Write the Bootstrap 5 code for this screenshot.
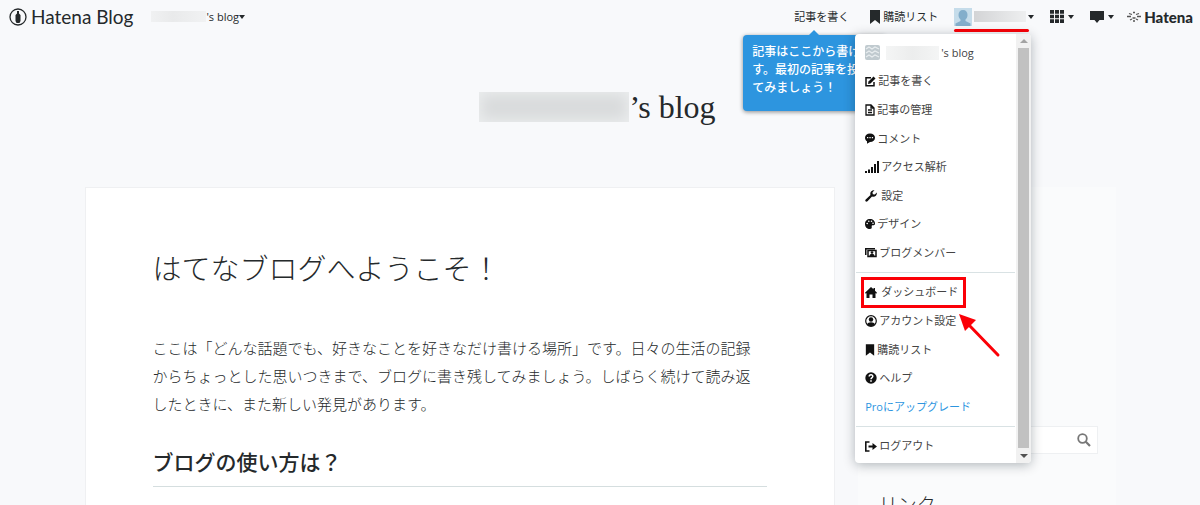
<!DOCTYPE html>
<html lang="ja">
<head>
<meta charset="utf-8">
<meta name="viewport" content="width=device-width, initial-scale=1">
<title>Hatena Blog</title>
<link href="https://cdn.jsdelivr.net/npm/bootstrap@5.3.0/dist/css/bootstrap.min.css" rel="stylesheet">
<style>
:root{--ink:#25292b;--ui:"Open Sans","Noto Sans CJK JP",sans-serif}
body{background:#f8f9fb;color:var(--ink);font-family:"Noto Sans CJK JP",sans-serif}
a{color:inherit;text-decoration:none}
svg{display:block;flex:none}
.topbar{height:33px;padding:0 7px 0 9px;font:11px/20px var(--ui)}
.topbar button{border:0;background:none;padding:0;color:inherit;font:inherit}
.logo-word{font:19px/24px Lato,sans-serif}
.hatena-word{font:900 15px/20px Lato,sans-serif}
.tight{gap:2px}
.after-item{margin-left:12px}
.first-gap{margin-left:20px}
.blog-switch{margin-left:18px}
.caret{width:0;height:0;border:3px solid transparent;border-top:4px solid var(--ink);border-bottom:0}
.masked{display:block;background:#eaebec}
.masked-blog{width:55px;height:11px;background:linear-gradient(90deg,#f0f1f2,#e9eaeb 40%,#f1f2f3)}
.masked-user{width:52px;height:11px;background:linear-gradient(90deg,#d3d4d6,#eeeff0)}
.masked-item{width:53px;height:14px;background:linear-gradient(90deg,#f4f5f5,#eceded 50%,#f4f5f5)}
.masked-title{width:150px;height:30px;background:#d9dbdc;box-shadow:inset 0 0 14px 2px #eceeef}
.user-mark{position:absolute;left:0;width:75px;top:21px;height:3px;border-radius:2px;background:#fb0007}
.tip{position:absolute;top:28px;left:-51px;width:143px;height:76px;padding:7px 9px;border-radius:4px;background:#2d95df;color:#fff;font:500 12px/18px "Noto Sans CJK JP",sans-serif;white-space:nowrap;box-shadow:0 1px 4px rgba(0,0,0,.45);z-index:5}
.tip::before{content:"";position:absolute;left:66px;top:-5px;border:5px solid transparent;border-top:0;border-bottom-color:#2d95df}
.usermenu{position:absolute;right:3px;top:26px;width:176px;height:429px;background:#fff;border-radius:4px;box-shadow:0 2px 12px rgba(0,20,30,.3);z-index:10;overflow:hidden}
.menu-list{padding:5px 0 2px;min-width:0}
.menu-list a{padding:0 10px;gap:2px;color:#444}
.menu-list a.upgrade{color:#2d95df}
.menu-list svg{color:#111}
.rule{height:1px;margin:5px 1px;background:#d9e2e4}
.scrolltrack{width:15px;background:#f1f1f1;padding:5px 2px}
.thumb{background:#c1c1c1;margin:5px 0 6px}
.arr{width:0;height:0;border:4px solid transparent}
.arr.up{border-top:0;border-bottom-color:#a3a3a3}
.arr.down{border-bottom:0;border-top-color:#505050}
.marked{position:relative}
.marked::after{content:"";position:absolute;left:6px;top:-1px;width:105px;height:31px;border:3px solid #fb0007}
.pointer{position:absolute;left:102px;top:278px}
.site-title{font:32px/40px "Liberation Serif","Noto Sans CJK JP",serif;padding:54px 5px 60px 0;margin:0}
.page{max-width:1031px}
.entry{width:72.8%;background:#fff;border:1px solid #eff0f2;padding:59px 67px 40px 67px}
.entry h2{font-size:29px;line-height:40px;font-weight:300;margin:0 0 47px}
.entry p{font-size:15px;line-height:28px;font-weight:300;margin:0 0 26px;padding-right:8px}
.entry h3{font-size:21px;line-height:34px;font-weight:500;margin:0;padding:0 0 8px;border-bottom:1px solid #d5dedf}
.side{width:25%;background:#fafbfc;padding:239px 18px 0 21px}
.search{border:1px solid #eef0f2;background:#fff;height:28px;padding-right:6px}
.search input{border:0;outline:0;background:none;min-width:0;font-size:12px}
.search button{border:0;background:none;padding:0;color:#777}
.side h2{font-size:19px;line-height:28px;font-weight:300;margin:36px 0 0}
</style>
</head>
<body>
<svg class="d-none" aria-hidden="true">
<symbol id="mark" viewBox="0 0 12 14"><path fill="currentColor" d="M1 0h10v14L6 10 1 14z"/></symbol>
</svg>
<header class="topbar d-flex align-items-center">
  <a href="#" class="d-flex align-items-center gap-1">
    <svg width="18" height="18" viewBox="0 0 18 18"><circle cx="9" cy="9" r="8" fill="none" stroke="#25292b" stroke-width="1.3"/><path fill="#25292b" d="M8 3h2v2.500l1.500 1.500v6L10.500 15h-3l-1-2V7L8 5.500z"/></svg>
    <span class="logo-word">Hatena Blog</span>
  </a>
  <button type="button" class="d-flex align-items-center blog-switch"><span class="masked masked-blog"></span>'s blog<span class="caret"></span></button>
  <nav class="d-flex align-items-center ms-auto">
    <div class="position-relative">
      <a href="#">記事を書く</a>
      <div class="tip">記事はここから書けま<br>す。最初の記事を投稿し<br>てみましょう！</div>
    </div>
    <a href="#" class="d-flex align-items-center tight first-gap"><svg width="12" height="14"><use href="#mark"/></svg>購読リスト</a>
    <div class="position-relative ms-3">
      <button type="button" class="d-flex align-items-center tight" aria-label="ユーザーメニュー">
        <svg width="18" height="18" viewBox="0 0 18 18"><path fill="#c5dcea" d="M0 0h18v18H0z"/><path fill="#83aecb" d="M9 2c3 0 4.500 2 4.500 5 0 2-1 3.500-2 4.500V13l5 2.500V18h-15v-2.500l5-2.500v-1.500c-1-1-2-2.500-2-4.500 0-3 1.500-5 4.500-5z"/></svg>
        <span class="masked masked-user"></span><span class="caret"></span>
      </button>
      <span class="user-mark"></span>
      <div class="usermenu d-flex">
        <div class="menu-list d-flex flex-column flex-fill">
          <a href="#" class="d-flex align-items-center flex-fill"><svg width="15" height="15" viewBox="0 0 15 15"><rect width="15" height="15" rx="2" fill="#c0cacf"/><path d="M1 4l3-2 3 2 3-2 4 2M1 8l3-2 3 2 3-2 4 2M1 12l3-2 3 2 3-2 4 2" stroke="#e8edef" stroke-width="1.300" fill="none"/></svg><span class="masked masked-item ms-1"></span>'s blog</a>
          <a href="#" class="d-flex align-items-center flex-fill"><svg width="11" height="11" viewBox="0 0 11 11"><path d="M6 1.700H1v8h8V6" fill="none" stroke="currentColor" stroke-width="1.500"/><path fill="currentColor" d="M3 8l.5-2.500L8.500.5l2 2L5.500 7.500z"/></svg>記事を書く</a>
          <a href="#" class="d-flex align-items-center flex-fill"><svg width="10" height="12" viewBox="0 0 10 12"><path d="M1 1h5l3 3v7H1zM6 1v3h3M3 6h4M3 8.500h4" fill="none" stroke="currentColor" stroke-width="1.300"/></svg>記事の管理</a>
          <a href="#" class="d-flex align-items-center flex-fill"><svg width="10" height="11" viewBox="0 0 10 11"><path fill="currentColor" d="M5 .5C8 .5 10 2.300 10 4.700S8 9 5 9L2 10.800V8.300C.7 7.500 0 6.200 0 4.700 0 2.300 2 .5 5 .5z"/><path fill="#fff" d="M2 4h1.300v1.300H2zM4.400 4h1.300v1.300H4.400zM6.800 4h1.300v1.300H6.800z"/></svg>コメント</a>
          <a href="#" class="d-flex align-items-center flex-fill"><svg width="14" height="12" viewBox="0 0 14 12"><path fill="currentColor" d="M0 10h2v2H0zM3 8.500h2V12H3zM6 6h2v6H6zM9 3h2v9H9zM12 0h2v12h-2z"/></svg>アクセス解析</a>
          <a href="#" class="d-flex align-items-center flex-fill gap-1"><svg width="12" height="12" viewBox="0 0 12 12"><path fill="currentColor" d="M9.500.2L7.500 2.200l.3 2 2 .3L11.800 2.500C12.300 5 10 7.500 7 6.500L2.500 11.300C1 12.500-.5 11 .7 9.500L5.500 5C4.500 2 7 -.3 9.500.2z"/></svg>設定</a>
          <a href="#" class="d-flex align-items-center flex-fill"><svg width="10" height="10" viewBox="0 0 10 10"><path fill="currentColor" d="M5 0c3 0 5 2 5 4.500C10 7 8 6 7 6.500S8 10 5 10 0 8 0 5s2-5 5-5z"/><g fill="#fff"><circle cx="2.200" cy="4.500" r=".8"/><circle cx="3.800" cy="2.200" r=".8"/><circle cx="6.500" cy="2.200" r=".8"/><circle cx="8" cy="4.200" r=".8"/></g></svg>デザイン</a>
          <a href="#" class="d-flex align-items-center flex-fill"><svg width="12" height="11" viewBox="0 0 12 11"><path fill="currentColor" d="M0 1h10v1.500H1.500V8H0z"/><path fill="none" stroke="currentColor" stroke-width="1.500" d="M3 3.500h8v6H3z"/><circle cx="7" cy="5.500" r="1.300" fill="currentColor"/><path fill="currentColor" d="M4.500 9c0-3 5-3 5 0z"/></svg>ブログメンバー</a>
          <div class="rule"></div>
          <a href="#" class="d-flex align-items-center flex-fill marked gap-1"><svg width="12" height="11" viewBox="0 0 12 11"><path fill="currentColor" d="M6 0l2.500 2.300V1H10v2.700L12 5.800 11.200 6.700l-.7-.6V11h-3V7.500h-3V11h-3V6.100l-.7.6L0 5.800z"/></svg>ダッシュボード</a>
          <a href="#" class="d-flex align-items-center flex-fill"><svg width="12" height="12" viewBox="0 0 12 12"><circle cx="6" cy="6" r="5.300" fill="none" stroke="currentColor" stroke-width="1.200"/><circle cx="6" cy="4.500" r="2.200" fill="currentColor"/><path fill="currentColor" d="M2 9.500C3 6.500 9 6.500 10 9.500 8 11.500 4 11.500 2 9.500z"/></svg>アカウント設定</a>
          <a href="#" class="d-flex align-items-center flex-fill"><svg width="10" height="12"><use href="#mark"/></svg>購読リスト</a>
          <a href="#" class="d-flex align-items-center flex-fill"><svg width="12" height="12" viewBox="0 0 12 12"><circle cx="6" cy="6" r="5.700" fill="currentColor"/><path d="M4.200 4.600C4.200 2.200 8 2.300 7.800 4.500 7.700 5.600 6 5.600 6 7.200" fill="none" stroke="#fff" stroke-width="1.500"/><path fill="#fff" d="M5.200 8.200h1.600v1.500H5.200z"/></svg>ヘルプ</a>
          <a href="#" class="d-flex align-items-center flex-fill upgrade">Proにアップグレード</a>
          <div class="rule"></div>
          <a href="#" class="d-flex align-items-center flex-fill"><svg width="12" height="11" viewBox="0 0 12 11"><path d="M4.500 1H.8v9h3.700" fill="none" stroke="currentColor" stroke-width="1.600"/><path fill="currentColor" d="M3.500 4.600H7.500V2L12 5.500 7.500 9V6.400h-4z"/></svg>ログアウト</a>
        </div>
        <div class="scrolltrack d-flex flex-column align-items-center"><span class="arr up"></span><span class="thumb flex-fill w-100"></span><span class="arr down"></span></div>
        <svg class="pointer" width="44" height="48" viewBox="0 0 44 48"><path d="M41 43L11 12" stroke="#fb0007" stroke-width="3" stroke-linecap="round"/><path fill="#fb0007" d="M2 2l17 6L8 19z"/></svg>
      </div>
    </div>
    <button type="button" class="d-flex align-items-center gap-1 ms-3" aria-label="サービス一覧"><svg width="14" height="13" viewBox="0 0 14 13"><path fill="currentColor" d="M0 0h4v3.700H0zM5 0h4v3.700H5zM10 0h4v3.700h-4zM0 4.700h4v3.600H0zM5 4.700h4v3.600H5zM10 4.700h4v3.600h-4zM0 9.300h4V13H0zM5 9.300h4V13H5zM10 9.300h4V13h-4z"/></svg><span class="caret"></span></button>
    <button type="button" class="d-flex align-items-center gap-1 ms-3" aria-label="お知らせ"><svg width="14" height="12" viewBox="0 0 14 12"><path fill="currentColor" d="M0 0h14v9H9.500L7 12 4.500 9H0z"/></svg><span class="caret"></span></button>
    <a href="#" class="d-flex align-items-center after-item"><svg width="18" height="12" viewBox="0 0 18 12"><path d="M1 5.500h4M11 5.500h4M6.500 7h3M3 2.500l3 1M13 2.500l-3 1M4 9l2-1M12 9l-2-1M7 1.500h2M7 10h2" stroke="#555" stroke-width="1.300" fill="none"/></svg><span class="hatena-word">Hatena</span></a>
  </nav>
</header>
<h1 class="site-title d-flex align-items-center justify-content-center"><span class="masked masked-title"></span>’s blog</h1>
<div class="page d-flex justify-content-between mx-auto">
  <main class="entry">
    <h2>はてなブログへようこそ！</h2>
    <p>ここは「どんな話題でも、好きなことを好きなだけ書ける場所」です。日々の生活の記録からちょっとした思いつきまで、ブログに書き残してみましょう。しばらく続けて読み返したときに、また新しい発見があります。</p>
    <h3>ブログの使い方は？</h3>
  </main>
  <aside class="side">
    <form class="search d-flex align-items-center"><input type="search" class="flex-fill" aria-label="記事を検索"><button type="button" aria-label="検索"><svg width="14" height="14" viewBox="0 0 14 14"><circle cx="5.500" cy="5.500" r="4.300" fill="none" stroke="currentColor" stroke-width="1.800"/><path d="M8.800 8.800L13 13" stroke="currentColor" stroke-width="2.200"/></svg></button></form>
    <h2>リンク</h2>
  </aside>
</div>
<script src="https://cdn.jsdelivr.net/npm/bootstrap@5.3.0/dist/js/bootstrap.bundle.min.js"></script>
</body>
</html>
